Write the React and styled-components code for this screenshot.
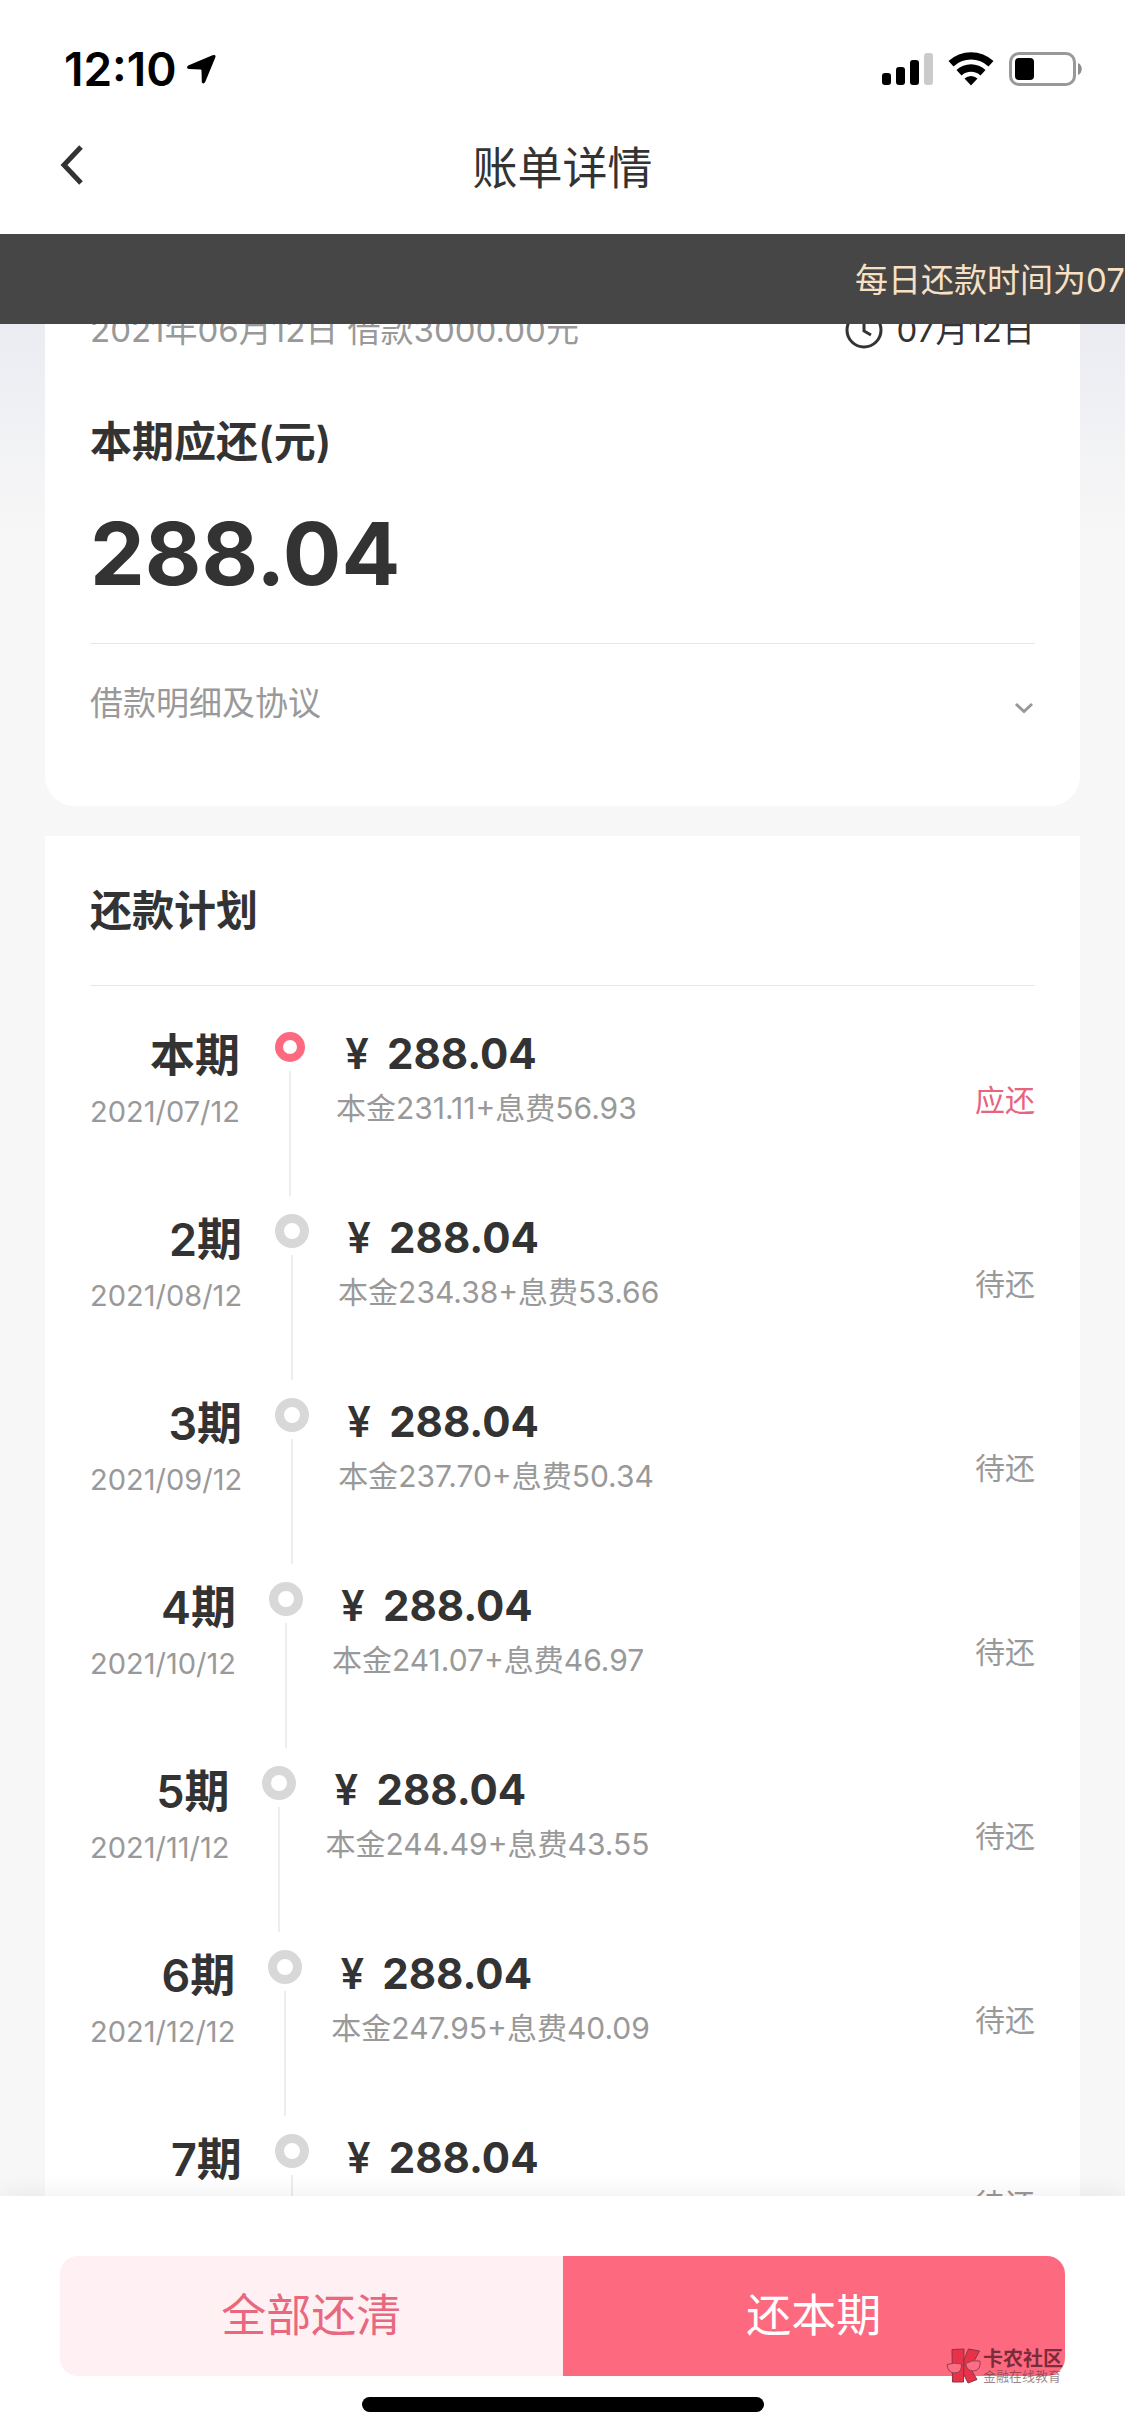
import React, { useState } from 'react';
import styled, { createGlobalStyle, css } from 'styled-components';

const plans = [
  { term: '本期', date: '2021/07/12', principal: '231.11', fee: '56.93', active: true },
  { term: '2期', date: '2021/08/12', principal: '234.38', fee: '53.66' },
  { term: '3期', date: '2021/09/12', principal: '237.70', fee: '50.34' },
  { term: '4期', date: '2021/10/12', principal: '241.07', fee: '46.97' },
  { term: '5期', date: '2021/11/12', principal: '244.49', fee: '43.55' },
  { term: '6期', date: '2021/12/12', principal: '247.95', fee: '40.09' },
  { term: '7期', date: '2022/01/12', principal: '251.46', fee: '36.58' },
];

const StatusIcons = () => (
  <svg width="201" height="36" viewBox="0 0 201 36" aria-hidden="true">
    <rect x="0" y="22" width="9" height="12" rx="3" />
    <rect x="14" y="16" width="9" height="18" rx="3" />
    <rect x="28" y="9" width="9" height="25" rx="3" />
    <rect x="42" y="2" width="9" height="32" rx="3" fill="#cbcbcb" />
    <path d="M66.500 10 A33 33 0 0 1 111.500 10 L106.500 15.500 A25.500 25.500 0 0 0 71.500 15.500 Z" />
    <path d="M74.500 19 A21 21 0 0 1 103.500 19 L98.500 24.500 A14 14 0 0 0 79.500 24.500 Z" />
    <path d="M82.500 27.500 A9.500 9.500 0 0 1 95.500 27.500 L89 34.500 Z" />
    <rect x="128.500" y="2.500" width="64" height="31" rx="8.500" fill="none" stroke="#999" strokeWidth="3" />
    <rect x="133" y="7" width="19" height="22" rx="4" />
    <path d="M196 12 C201 14 201 22 196 24 Z" fill="#8c8c8c" />
  </svg>
);

const LocationArrow = () => (
  <svg width="32" height="32" viewBox="0 0 32 32" aria-hidden="true">
    <path d="M27.500 2.200 Q31.500 1 30.200 4.800 L20.300 28.800 Q18.500 32.200 16.800 29.200 L16.500 17.500 Q16.500 16.500 15.500 16.500 L4 16 Q0.500 15 3.200 12.600 Z" />
  </svg>
);

const WatermarkLogo = () => (
  <svg width="36" height="36" viewBox="0 0 36 36" aria-hidden="true">
    <g fill="#e8324a" stroke="#8d3340" strokeWidth="1" strokeLinejoin="round">
      <path d="M22.500 1 L33.500 3 L27.500 14 L24 20 L31 31.500 L22 35 L16.500 24 L17 14 Z" />
      <path d="M6 1.500 L18 1 L17.500 34 L6.500 34 Z" />
    </g>
    <g fill="#f97084" stroke="#9c3b4a" strokeWidth="1">
      <path d="M1 16.500 Q8 14 15.500 16 Q16 25 8.500 25 Q2 25 1 16.500 Z" />
      <path d="M19.500 15.500 Q26 11.500 34 13 Q35 22 28 23 Q21 23.500 19.500 15.500 Z" />
      <path d="M15.500 17 L19.500 16" />
    </g>
  </svg>
);

const App = () => {
  const [open, setOpen] = useState(false);

  return (
    <Page>
      <GlobalStyle />
      <StatusBar>
        <Clock>
          12:10
          <LocationArrow />
        </Clock>
        <StatusIcons />
      </StatusBar>
      <NavBar>
        <BackButton aria-label="返回">
          <svg width="24" height="40" viewBox="0 0 24 40" aria-hidden="true">
            <path d="M21 2 L4 20 L21 38" />
          </svg>
        </BackButton>
        <NavTitle>账单详情</NavTitle>
      </NavBar>
      <Notice>每日还款时间为07</Notice>

      <Content>
        <BillCard>
          <BillMeta>
            <span>2021年06月12日 借款3000.00元</span>
            <DueDate>
              <svg width="38" height="38" viewBox="0 0 38 38" aria-hidden="true">
                <circle cx="19" cy="19" r="17" />
                <path d="M19 9 V20 L26 24" />
              </svg>
              07月12日
            </DueDate>
          </BillMeta>
          <Heading>本期应还(元)</Heading>
          <Total>288.04</Total>
          <DetailToggle aria-expanded={open} onClick={() => setOpen(!open)}>
            借款明细及协议
            <svg width="22" height="14" viewBox="0 0 22 14" aria-hidden="true">
              <path d="M3 3 L11 10.500 L19 3" />
            </svg>
          </DetailToggle>
        </BillCard>

        <PlanCard>
          <PlanHeading>还款计划</PlanHeading>
          <PlanList>
            {plans.map((plan) => (
              <PlanRow key={plan.date}>
                <Term>
                  <TermName>{plan.term}</TermName>
                  <TermDate>{plan.date}</TermDate>
                </Term>
                <Marker>
                  <Dot $active={plan.active} />
                  <Line />
                </Marker>
                <Detail>
                  <Amount>
                    <Currency>¥</Currency>
                    288.04
                  </Amount>
                  <Breakdown>
                    本金{plan.principal}+息费{plan.fee}
                  </Breakdown>
                </Detail>
                <State $active={plan.active}>{plan.active ? '应还' : '待还'}</State>
              </PlanRow>
            ))}
          </PlanList>
        </PlanCard>
      </Content>

      <Footer>
        <Actions>
          <ActionButton>全部还清</ActionButton>
          <ActionButton $primary>还本期</ActionButton>
          <Watermark>
            <WatermarkLogo />
            <div>
              <WatermarkName>卡农社区</WatermarkName>
              <WatermarkSlogan>金融在线教育</WatermarkSlogan>
            </div>
          </Watermark>
        </Actions>
        <HomeIndicator />
      </Footer>
    </Page>
  );
};

export default App;

const GlobalStyle = createGlobalStyle`
  * {
    box-sizing: border-box;
  }
  body {
    margin: 0;
    background: #fff;
    color: #333;
    font-family: Inter, 'Noto Sans CJK SC', sans-serif;
  }
  button {
    margin: 0;
    padding: 0;
    border: none;
    background: none;
    color: inherit;
    font: inherit;
  }
`;

const strokeIcon = css`
  fill: none;
  stroke: currentColor;
  stroke-width: 3px;
`;

const Page = styled.div`
  display: flex;
  flex-direction: column;
  height: 100vh;
`;

const StatusBar = styled.div`
  display: flex;
  align-items: center;
  justify-content: space-between;
  flex: none;
  height: 138px;
  padding: 0 42px 0 64px;
  color: #000;
`;

const Clock = styled.div`
  display: flex;
  align-items: center;
  gap: 8px;
  font-size: 46px;
  font-weight: 600;
`;

const NavBar = styled.header`
  display: grid;
  grid-template-columns: 60px 1fr 60px;
  align-items: center;
  flex: none;
  height: 96px;
  padding: 0 60px 34px;
`;

const BackButton = styled.button`
  display: flex;
  padding-bottom: 8px;
  svg {
    ${strokeIcon}
    stroke-width: 5px;
  }
`;

const NavTitle = styled.h1`
  margin: 0;
  text-align: center;
  font-size: 45px;
  font-weight: 400;
  line-height: 60px;
`;

const Notice = styled.div`
  position: relative;
  z-index: 1;
  flex: none;
  overflow: hidden;
  height: 90px;
  padding-left: 76%;
  background: #464646;
  color: #f8e0c4;
  font-size: 33px;
  line-height: 92px;
  white-space: nowrap;
`;

const Content = styled.main`
  flex: 1;
  min-height: 0;
  overflow: hidden;
  padding: 0 45px;
  background: linear-gradient(#ebecf2, #f7f7f7 210px);
`;

const BillCard = styled.section`
  margin-top: -30px;
  padding: 0 45px;
  border-radius: 30px;
  background: #fff;
`;

const BillMeta = styled.div`
  display: flex;
  justify-content: space-between;
  padding-top: 12px;
  color: #999;
  font-size: 33px;
  line-height: 48px;
`;

const DueDate = styled.span`
  display: flex;
  align-items: center;
  gap: 14px;
  color: #333;
  svg {
    ${strokeIcon}
  }
`;

const Heading = styled.h2`
  margin: 0;
  padding-top: 58px;
  font-size: 42px;
  font-weight: 600;
  line-height: 60px;
`;

const Total = styled.div`
  padding: 28px 0 35px;
  border-bottom: 1px solid #e6e6e6;
  font-size: 87px;
  font-weight: 700;
  line-height: 108px;
`;

const DetailToggle = styled.button`
  display: flex;
  align-items: center;
  justify-content: space-between;
  width: 100%;
  padding: 35px 0 79px;
  color: #999;
  font-size: 33px;
  line-height: 48px;
  svg {
    ${strokeIcon}
    margin-top: 10px;
  }
`;

const PlanCard = styled.section`
  margin-top: 30px;
  padding: 0 45px;
  background: #fff;
`;

const PlanHeading = styled.h2`
  margin: 0;
  padding: 45px 0 44px;
  border-bottom: 1px solid #e6e6e6;
  font-size: 42px;
  font-weight: 600;
  line-height: 60px;
`;

const PlanList = styled.ul`
  margin: 0;
  padding: 35px 0 0;
  list-style: none;
`;

const PlanRow = styled.li`
  display: flex;
  height: 184px;
`;

const Term = styled.div`
  text-align: right;
`;

const TermName = styled.div`
  font-size: 45px;
  font-weight: 600;
  line-height: 70px;
`;

const TermDate = styled.div`
  color: #999;
  font-size: 29px;
  line-height: 42px;
`;

const Marker = styled.div`
  display: flex;
  flex-direction: column;
  align-items: center;
  width: 36px;
  margin: 0 28px 0 32px;
  padding: 8px 0 9px;
`;

const Dot = styled.span`
  flex: none;
  width: ${({ $active }) => ($active ? 30 : 34)}px;
  height: ${({ $active }) => ($active ? 30 : 34)}px;
  margin: ${({ $active }) => ($active ? 3 : 1)}px 0;
  border: ${({ $active }) => ($active ? '8px solid #fd6a80' : '9px solid #d8d8d8')};
  border-radius: 50%;
`;

const Line = styled.span`
  flex: 1;
  width: 2px;
  margin-top: 6px;
  background: #ededed;
`;

const Detail = styled.div`
  flex: 1;
`;

const Amount = styled.div`
  display: flex;
  gap: 9px;
  font-size: 42px;
  font-weight: 700;
  line-height: 66px;
`;

const Currency = styled.span`
  width: 42px;
  text-align: center;
  font-weight: 600;
`;

const Breakdown = styled.div`
  color: #999;
  font-size: 30px;
  line-height: 42px;
`;

const State = styled.div`
  padding-top: 58px;
  color: ${({ $active }) => ($active ? '#e8637c' : '#999')};
  font-size: 30px;
  line-height: 42px;
`;

const Footer = styled.footer`
  position: relative;
  flex: none;
  padding: 60px 60px 24px;
  background: #fff;
  box-shadow: 0 0 24px rgba(0, 0, 0, 0.08);
`;

const Actions = styled.div`
  position: relative;
  display: flex;
`;

const ActionButton = styled.button`
  flex: 1;
  background: ${({ $primary }) => ($primary ? '#fd6a80' : '#fff0f3')};
  color: ${({ $primary }) => ($primary ? '#fff' : '#e8697f')};
  border-radius: ${({ $primary }) => ($primary ? '0 18px 18px 0' : '18px 0 0 18px')};
  font-size: 45px;
  line-height: 120px;
`;

const Watermark = styled.div`
  position: absolute;
  right: 2px;
  bottom: -8px;
  display: flex;
  align-items: center;
  gap: 1px;
`;

const WatermarkName = styled.div`
  color: #7c2b3c;
  font-size: 20px;
  font-weight: 700;
  line-height: 20px;
`;

const WatermarkSlogan = styled.div`
  color: rgba(90, 50, 55, 0.6);
  font-size: 13px;
  line-height: 14px;
`;

const HomeIndicator = styled.div`
  width: 40%;
  height: 15px;
  margin: 21px auto 0;
  border-radius: 8px;
  background: #000;
`;
